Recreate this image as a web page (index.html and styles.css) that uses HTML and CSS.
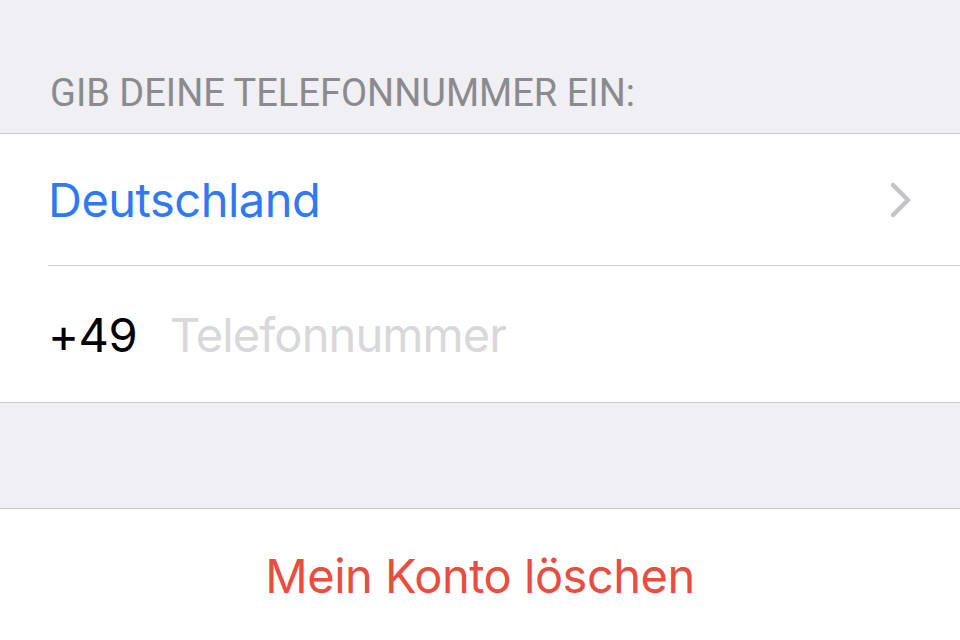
FILE: index.html
```html
<!DOCTYPE html>
<html lang="de">

<head>
    <meta charset="UTF-8">
    <meta name="viewport" content="width=device-width, initial-scale=1.0">
    <title>Telefonnummer ändern</title>
    <link rel="stylesheet" href="styles.css">
</head>

<body>
    <div class="screen">
        <h2 class="section-title">GIB DEINE TELEFONNUMMER EIN:</h2>

        <div class="group">
            <div class="cell cell-link">
                <span class="country">Deutschland</span>
                <svg class="chevron" width="26" height="40" viewBox="0 0 26 40">
                    <path d="M5 5 L20 20 L5 35" fill="none" stroke="#c4c4c8" stroke-width="4.5" stroke-linecap="round" stroke-linejoin="round" />
                </svg>
            </div>
            <div class="cell">
                <span class="prefix">+49</span>
                <input type="tel" class="phone-input" placeholder="Telefonnummer">
            </div>
        </div>

        <div class="spacer"></div>

        <div class="group">
            <button type="button" class="delete-btn">Mein Konto löschen</button>
        </div>
    </div>
</body>

</html>
```

FILE: styles.css
```css
body {
    margin: 0;
    padding: 0;
    font-family: "Inter", "Liberation Sans", sans-serif;
    background-color: #efeff4;
    overflow: hidden;
}

.screen {
    width: 960px;
    height: 640px;
}

.section-title {
    margin: 0;
    height: 133px;
    box-sizing: border-box;
    padding: 0 48px 21px 50px;
    display: flex;
    align-items: flex-end;
    font-family: "Roboto", sans-serif;
    font-weight: 400;
    font-size: 38px;
    letter-spacing: 0;
    line-height: 1;
    color: #8a8a8f;
}

.group {
    background-color: #fff;
    border-top: 1px solid #c8c7cc;
    border-bottom: 1px solid #c8c7cc;
}

.cell {
    height: 131px;
    margin-left: 48px;
    padding-right: 48px;
    display: flex;
    align-items: center;
    font-size: 47px;
    letter-spacing: -0.5px;
}

.cell + .cell {
    border-top: 1px solid #d0d0d4;
    height: 136px;
}

.cell-link {
    justify-content: space-between;
}

.country {
    color: #3079f4;
}

.chevron {
    display: block;
    margin-right: -2px;
}

.prefix {
    color: #000;
    width: 122px;
    flex-shrink: 0;
}

.phone-input {
    flex: 1;
    border: none;
    outline: none;
    padding: 0;
    font-family: inherit;
    font-size: 47px;
    letter-spacing: -0.9px;
    color: #000;
    background: transparent;
}

.phone-input::placeholder {
    color: #d8d8db;
}

.spacer {
    height: 105px;
}

.delete-btn {
    display: block;
    width: 100%;
    height: 132px;
    border: none;
    background: transparent;
    font-family: inherit;
    font-size: 47px;
    letter-spacing: -0.5px;
    color: #e94d3f;
    cursor: pointer;
}
```
